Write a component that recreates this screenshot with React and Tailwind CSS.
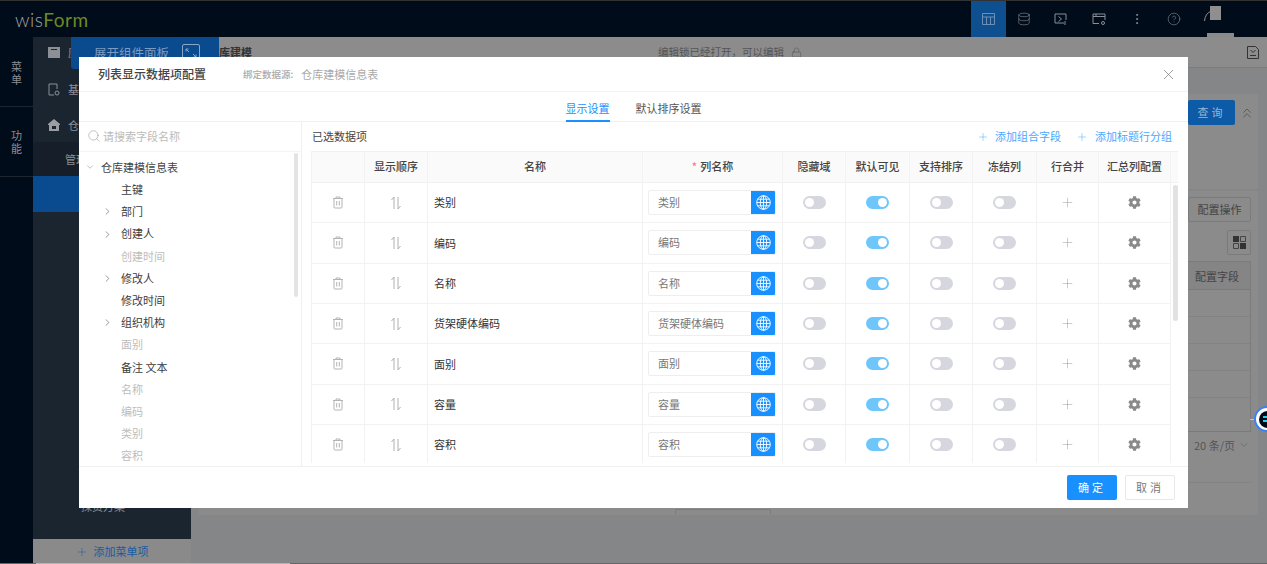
import React from "react";
import { Database, CircleHelp, EllipsisVertical, Plus, X, Search, ChevronDown, ChevronRight, ChevronsUp, Lock } from "lucide-react";
import { FaCog } from "react-icons/fa";

const fields = ["类别", "编码", "名称", "货架硬体编码", "面别", "容量", "容积"];

const headers = ["", "显示顺序", "名称", "列名称", "隐藏域", "默认可见", "支持排序", "冻结列", "行合并", "汇总列配置"];

const tree = [
  { name: "主键" },
  { name: "部门", arrow: true },
  { name: "创建人", arrow: true },
  { name: "创建时间", off: true },
  { name: "修改人", arrow: true },
  { name: "修改时间" },
  { name: "组织机构", arrow: true },
  { name: "面别", off: true },
  { name: "备注 文本" },
  { name: "名称", off: true },
  { name: "编码", off: true },
  { name: "类别", off: true },
  { name: "容积", off: true },
];

const cols = "grid grid-cols-[53px_63px_215px_140px_63px_64px_63px_64px_62px_72px] w-[859px]";

const Trash = () => (
  <svg width="12" height="13" viewBox="0 0 12 13" fill="none" stroke="#b4b4b4" strokeWidth="1">
    <path d="M1 2.5h10M4 2.5V1h4v1.5M2 2.5V11a1 1 0 0 0 1 1h6a1 1 0 0 0 1-1V2.5M4.7 5v4.5M7.3 5v4.5" />
  </svg>
);

const SortIcon = () => (
  <svg width="12" height="14" viewBox="0 0 12 14" fill="none" stroke="#b0b0b0" strokeWidth="1">
    <path d="M4 13V1L1.5 4M8 1v12l2.5-3" />
  </svg>
);

const GlobeIcon = () => (
  <svg width="15" height="15" viewBox="0 0 15 15" fill="none" stroke="#fff" strokeWidth="0.9">
    <circle cx="7.5" cy="7.5" r="6.8" />
    <ellipse cx="7.5" cy="7.5" rx="3.2" ry="6.8" />
    <path d="M7.5 .7v13.6M.7 7.5h13.6M1.6 4.2h11.8M1.6 10.8h11.8" />
  </svg>
);

const Toggle = ({ on }) => (
  <div className={on ? "flex h-[13px] w-[23px] items-center justify-end rounded-full bg-[#6ec6fb] px-[2px]" : "flex h-[13px] w-[23px] items-center rounded-full bg-[#d6d6df] px-[2px]"}>
    <div className="h-[9px] w-[9px] rounded-full bg-white" />
  </div>
);

const Cell = ({ children, className = "" }) => (
  <div className={"flex items-center justify-center border-r border-[#f2f2f2] " + className}>{children}</div>
);

const Row = ({ name }) => (
  <div className={cols + " h-[40.33px] border-b border-[#f2f2f2]"}>
    <Cell><Trash /></Cell>
    <Cell><SortIcon /></Cell>
    <Cell className="!justify-start pl-[6px] text-[#333]">{name}</Cell>
    <Cell className="!justify-start pl-[5px]">
      <div className="flex h-[25px] w-[128px] overflow-hidden rounded-[2px] border border-[#eeeeee]">
        <div className="flex-1 pl-[9px] leading-[23px] text-[#777]">{name}</div>
        <div className="-my-px -mr-px flex w-[25px] items-center justify-center bg-[#1890ff]"><GlobeIcon /></div>
      </div>
    </Cell>
    <Cell><Toggle /></Cell>
    <Cell><Toggle on /></Cell>
    <Cell><Toggle /></Cell>
    <Cell><Toggle /></Cell>
    <Cell><Plus size={15} strokeWidth={0.8} color="#999" /></Cell>
    <Cell><FaCog size={13} color="#8a8a8a" /></Cell>
  </div>
);

const Modal = () => (
  <div className="absolute left-[79px] top-[57px] flex h-[451px] w-[1109px] flex-col bg-white text-[11px]">
    <div className="flex h-[35px] items-center border-b border-[#f2f2f2] pl-[19px] pr-[11px]">
      <span className="text-[12px] font-medium text-[#444]">列表显示数据项配置</span>
      <span className="ml-[37px] text-[9.5px] font-medium text-[#aaa]">绑定数据源:</span>
      <span className="ml-[8px] text-[#aaa]">仓库建模信息表</span>
      <X size={17} strokeWidth={1} color="#777" className="ml-auto" />
    </div>
    <div className="flex h-[30px] justify-center gap-[26px] border-b border-[#f0f0f0]">
      <div className="h-[30px] border-b-2 border-[#1890ff] pt-[8px] text-[#1890ff]">显示设置</div>
      <div className="pt-[8px] text-[#555]">默认排序设置</div>
    </div>
    <div className="flex h-[345px] border-b border-[#f0f0f0]">
      {/* 左侧字段树 */}
      <div className="w-[223px] shrink-0 border-r border-[#f0f0f0]">
        <div className="flex h-[29.5px] items-center gap-[2px] border-b border-[#f4f4f4] pl-[8px] text-[#bbb]">
          <Search size={14} strokeWidth={1} color="#999" />
          <span>请搜索字段名称</span>
        </div>
        <div className="flex h-[314px] justify-between overflow-hidden pr-[3px]">
          <div className="pt-[4.5px]">
            <div className="flex h-[22.2px] items-center pl-[6px] text-[#444]">
              <ChevronDown size={10} strokeWidth={1} color="#666" />
              <span className="ml-[6px]">仓库建模信息表</span>
            </div>
            {tree.map((t, i) => (
              <div key={i} className="relative flex h-[22.2px] items-center pl-[42px]">
                {t.arrow && <ChevronRight size={11} strokeWidth={1.2} color="#444" className="absolute left-[23px] top-[6px]" />}
                <span className={t.off ? "text-[#bdbdbd]" : "text-[#3c3c3c]"}>{t.name}</span>
              </div>
            ))}
          </div>
          <div className="mt-[1px] h-[144px] w-[4px] rounded-full bg-[#e4e4e4]" />
        </div>
      </div>
      {/* 右侧已选数据项 */}
      <div className="flex-1 pl-[9px]">
        <div className="flex h-[29px] items-center justify-between pl-[1px] pr-[16px] text-[#444]">
          <span>已选数据项</span>
          <div className="flex gap-[15px] text-[#4aa8ff]">
            <span className="flex items-center gap-[6px]"><Plus size={12} strokeWidth={1} />
              <span>添加组合字段</span></span>
            <span className="flex items-center gap-[7px]"><Plus size={12} strokeWidth={1} />
              <span>添加标题行分组</span></span>
          </div>
        </div>
        <div className="w-[867px] border-l border-[#f2f2f2]">
          <div className="flex h-[32px] border-y border-[#f0f0f0] bg-[#fafafa] pb-[1px] font-medium text-[#444]">
            <div className={cols}>
              {headers.map((h, i) => (
                <Cell key={i}>
                  {h === "列名称" && <span className="mr-[3px] text-[#f77]">*</span>}
                  {h}
                </Cell>
              ))}
            </div>
          </div>
          <div className="flex h-[280px] overflow-hidden">
            <div>
              {fields.map((f, i) => <Row key={i} name={f} />)}
            </div>
            <div className="ml-[2px] mt-[2px] h-[136px] w-[5px] rounded-full bg-[#e2e2e2]" />
          </div>
        </div>
      </div>
    </div>
    <div className="flex flex-1 items-center justify-end gap-[8px] pr-[13px]">
      <button className="h-[25px] w-[50px] rounded-[2px] bg-[#1890ff] tracking-[3px] text-white">确定</button>
      <button className="h-[25px] w-[50px] rounded-[2px] border border-[#e8e8e8] tracking-[3px] text-[#777]">取消</button>
    </div>
  </div>
);

const TopBar = () => (
  <div className="flex h-[37px] items-center border-t border-[#333] bg-[#010c1a]">
    <div className="ml-[15px] text-[19px] leading-none tracking-[0.5px] font-['Lato',sans-serif]">
      <span className="font-light text-[#a5a5a5]">wis</span><span className="text-[#6c8a22]">Form</span>
    </div>
    <div className="ml-auto mr-[39px] flex h-full items-center">
      <div className="flex h-full w-[35px] items-center justify-center bg-[#0d4f8f]">
        <svg width="13" height="12" viewBox="0 0 13 12" fill="none" stroke="#6d8fb5" strokeWidth="1">
          <path d="M.5 .5h12v11H.5zM.5 4h12M4.5 4v7.5M8.5 4v7.5" />
        </svg>
      </div>
      <div className="flex w-[36px] justify-center"><Database size={14} strokeWidth={1} color="#8a8f96" /></div>
      <div className="flex w-[38px] justify-center">
        <svg width="14" height="13" viewBox="0 0 14 13" fill="none" stroke="#8a8f96" strokeWidth="1">
          <path d="M10 10H1V1h11v6M4.5 3.5l3 2.5-3 2.5M11 8v4" />
        </svg>
      </div>
      <div className="flex w-[37px] justify-center">
        <svg width="14" height="13" viewBox="0 0 14 13" fill="none" stroke="#8a8f96" strokeWidth="1">
          <path d="M7 10.5H1V1h12v6M1 3.5h12M4 1v2.5" /><circle cx="11" cy="10" r="1.5" />
        </svg>
      </div>
      <div className="flex w-[39px] justify-center"><EllipsisVertical size={14} strokeWidth={1.6} color="#8a8f96" /></div>
      <div className="flex w-[36px] justify-center"><CircleHelp size={14} strokeWidth={1} color="#8a8f96" /></div>
      <div className="relative w-[36px] self-stretch">
        <svg width="7" height="11" viewBox="0 0 7 11" fill="none" stroke="#8f8f8f" className="absolute left-[12px] top-[9px]">
          <path d="M.5 11C1 6 3 3 7 1" />
        </svg>
        <div className="absolute left-[18px] top-[5px] h-[14px] w-[11px] bg-[#8f8f8f]" />
        <div className="absolute left-[15px] top-[32px] h-[4px] w-[27px] bg-[#8a8a8a]" />
      </div>
    </div>
  </div>
);

const SideItem = ({ icon, text, className = "" }) => (
  <div className={"flex items-center pl-[15px] text-[11px] text-[#8c9096] " + className}>
    {icon}
    <span className="ml-[8px]">{text}</span>
  </div>
);

const Sidebar = () => (
  <div className="flex w-[158px] shrink-0 flex-col bg-[#1b2530]">
    <SideItem className="h-[30px]" text="应用" icon={
      <svg width="12" height="12" viewBox="0 0 12 12" fill="#8c9096"><path d="M0 1h12v11H0zM3 3v1h6V3z" /></svg>
    } />
    <SideItem className="mt-[3px] h-[38px]" text="基础设置" icon={
      <svg width="12" height="13" viewBox="0 0 12 13" fill="none" stroke="#8c9096"><path d="M6 12H1V1h8v5" /><circle cx="9" cy="10" r="2" /></svg>
    } />
    <SideItem className="h-[34px]" text="仓库建模" icon={
      <svg width="12" height="12" viewBox="0 0 12 12" fill="#9a9da1"><path d="M6 0l6 5v1h-1v6H1V6H0V5zM4 7v3h4V7z" /></svg>
    } />
    <div className="flex h-[34px] items-center bg-[#161f29] pl-[32px] text-[11px] text-[#8c9096]">管理</div>
    <div className="h-[36px] bg-[#0a4a8f]" />
    <div className="flex-1 pl-[48px] pt-[286px] text-[11px] text-[#8c9096]">採货方案</div>
    <div className="flex h-[25px] items-center justify-center gap-[6px] bg-[#8a8a8a] text-[11px] text-[#1a5aa0]">
      <Plus size={12} strokeWidth={1} />
      <span>添加菜单项</span>
    </div>
  </div>
);

const Main = () => (
  <div className="flex flex-1 flex-col bg-[#858687] text-[11px] text-[#4d4d4d]">
    <div className="flex h-[31px] items-center border-b border-[#7c7c7c] bg-[#8c8c8c] pl-[28px] pr-[7px]">
      <span className="font-bold text-[#333]">库建模</span>
      <span className="ml-[406px] text-[10.5px] text-[#555]">编辑锁已经打开，可以编辑</span>
      <Lock size={11} strokeWidth={1} className="ml-[7px]" />
      <svg width="12" height="13" viewBox="0 0 12 13" fill="none" stroke="#333" className="ml-auto mr-[1px]">
        <path d="M.5 .5h8l3 3v9H.5zM3.5 4L6 6.5 8.5 4M3 9.5h6" />
      </svg>
    </div>
    <div className="flex flex-1 flex-col pl-[8px] pr-[9px] pt-[26px]">
      <div className="flex h-[95px] justify-end bg-[#8b8b8c] pt-[6px]">
        <div className="flex h-[25px] w-[47px] items-center justify-center rounded-[2px] bg-[#0d5aa7] tracking-[3px] text-[#9db5cf]">查询</div>
        <div className="ml-[4px] mr-[3px] flex w-[16px] justify-center pt-[5px]"><ChevronsUp size={16} strokeWidth={1} color="#444" /></div>
      </div>
      <div className="mt-[2px] flex h-[324px] flex-col items-end bg-[#8b8b8c] pr-[7px] pt-[6px]">
        <div className="flex h-[25px] w-[63px] items-center justify-center rounded-[2px] border border-[#7b7b7b] text-[#444]">配置操作</div>
        <div className="mt-[8px] flex h-[25px] w-[24px] items-center justify-center rounded-[2px] border border-[#7b7b7b]">
          <svg width="13" height="13" viewBox="0 0 13 13">
            <path d="M0 0h6v6H0zM7 7h6v6H7z" fill="#333" />
            <path d="M7.5 .5h5v5h-5zM.5 7.5h5v5h-5z" fill="none" stroke="#444" />
          </svg>
        </div>
        <div className="mt-[6px] h-[171px] w-[63px] border-y border-r border-[#7b7b7b]">
          <div className="h-[28px] border-b border-[#7b7b7b] bg-[#858585] pl-[7px] leading-[28px] text-[#444]">配置字段</div>
          <div className="h-[27px] border-b border-[#838383]" />
          <div className="h-[27px] border-b border-[#838383]" />
          <div className="h-[27px] border-b border-[#838383]" />
          <div className="h-[27px] border-b border-[#838383]" />
        </div>
        <div className="mt-[5px] flex h-[16px] w-[63px] items-center text-[#555]">
          <span className="ml-[6px]">20 条/页</span>
          <ChevronDown size={12} strokeWidth={1} className="ml-[3px]" />
        </div>
        <div className="mt-[29px] h-px w-[200px] bg-[#838383]" />
        <div className="mr-[480px] mt-[26px] h-[5px] w-[96px] rounded-t-[2px] border-x border-t border-[#7b7b7b]" />
      </div>
    </div>
  </div>
);

export default function App() {
  return (
    <div className="relative h-[564px] w-[1267px] overflow-hidden bg-[#858687] font-['Noto_Sans_CJK_SC','Noto_Sans',sans-serif]">
      <TopBar />
      <div className="flex h-[527px]">
        <div className="w-[33px] shrink-0 bg-[#010c1a] text-[11px] leading-[13px] text-[#8a8f96]">
          <div className="flex h-[70px] items-center justify-center border-b border-[#1c2530] pt-[1px]">
            <span className="w-[11px] pt-[2px]">菜单</span>
          </div>
          <div className="flex h-[70px] items-center justify-center border-b border-[#1c2530]">
            <span className="w-[11px]">功能</span>
          </div>
        </div>
        <Sidebar />
        <Main />
      </div>

      {/* 展开组件面板按钮 */}
      <div className="absolute left-[71px] top-[37px] flex h-[32px] w-[148px] items-start rounded-b-[3px] bg-[#0a4a8f] pl-[23px] pt-[7px] text-[12.5px] text-[#7a9cc2]">
        <span>展开组件面板</span>
        <div className="ml-[13px] flex h-[17px] w-[18px] items-center justify-center rounded-[2px] border border-[#8aa5c6]">
          <svg width="12" height="10" viewBox="0 0 12 10" fill="none" stroke="#8aa5c6"><path d="M1 1l3 3M1 1v2.5M1 1h2.5M11 9L8 6M11 9V6.5M11 9H8.5" /></svg>
        </div>
      </div>

      <Modal />

      {/* 右侧悬浮球 */}
      <div className="absolute left-[1250px] top-[419px] h-px w-[4px] bg-[#b9c6dc]" />
      <div className="absolute left-[1254px] top-[406px] flex h-[26px] w-[26px] items-center justify-center rounded-full border-2 border-[#3b82f6] bg-white">
        <div className="flex h-[17px] w-[17px] items-center justify-center rounded-full bg-[#010c1a]">
          <div className="h-[6px] w-[8px] border-y-2 border-[#22d3ee]" />
        </div>
      </div>

      {/* 底部细线 */}
      <div className="absolute bottom-0 left-0 h-px w-full bg-[#666]" />
      <div className="absolute bottom-0 left-[36px] h-px w-[254px] bg-[#b5b5b5]" />
    </div>
  );
}
